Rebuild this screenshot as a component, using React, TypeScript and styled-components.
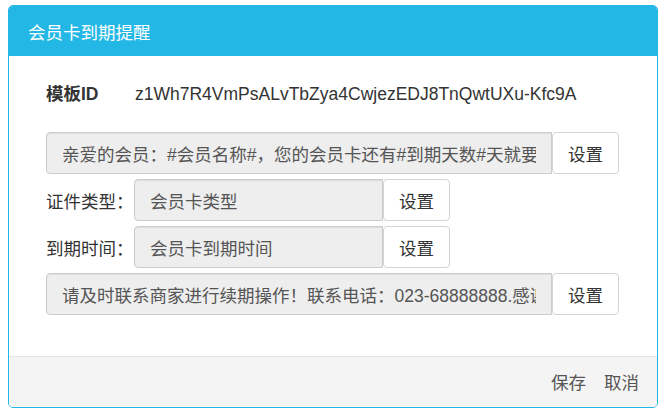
import React from "react";
import styled, { createGlobalStyle } from "styled-components";

const GlobalStyle = createGlobalStyle`
  html, body {
    margin: 0;
    padding: 0;
    background: #fff;
  }
  body {
    font-family: "Liberation Sans", "Noto Sans CJK SC", sans-serif;
    font-size: 17.5px;
    color: #333;
  }
  * {
    box-sizing: border-box;
  }
`;

type Field = {
  label?: string;
  value: string;
  wide?: boolean;
};

const fields: Field[] = [
  {
    value:
      "亲爱的会员：#会员名称#，您的会员卡还有#到期天数#天就要到期了，请及时续期。",
    wide: true,
  },
  { label: "证件类型：", value: "会员卡类型" },
  { label: "到期时间：", value: "会员卡到期时间" },
  {
    value: "请及时联系商家进行续期操作！联系电话：023-68888888.感谢您的支持！",
    wide: true,
  },
];

const App: React.FC = () => {
  return (
    <>
      <GlobalStyle />
      <Dialog>
        <Header>会员卡到期提醒</Header>
        <Body>
          <IdRow>
            <IdLabel>模板ID</IdLabel>
            <IdValue>z1Wh7R4VmPsALvTbZya4CwjezEDJ8TnQwtUXu-Kfc9A</IdValue>
          </IdRow>
          <Fields>
            {fields.map((f, i) => (
              <FieldRow key={i}>
                {f.label && <FieldLabel>{f.label}</FieldLabel>}
                <FieldInput readOnly value={f.value} $wide={f.wide} />
                <SetButton type="button">设置</SetButton>
              </FieldRow>
            ))}
          </Fields>
        </Body>
        <Footer>
          <FooterButton type="button">保存</FooterButton>
          <FooterButton type="button">取消</FooterButton>
        </Footer>
      </Dialog>
    </>
  );
};

export default App;

const Dialog = styled.div`
  display: flex;
  flex-direction: column;
  width: 650px;
  height: 403px;
  margin: 5px 0 0 8px;
  border: 1px solid #23b7e5;
  border-radius: 5px;
  overflow: hidden;
  background: #fff;
`;

const Header = styled.div`
  display: flex;
  align-items: center;
  height: 50px;
  padding: 0 19px;
  background: #23b7e5;
  color: #fff;
  font-size: 17.5px;
`;

const Body = styled.div`
  flex: 1;
  padding: 26px 37px 0;
`;

const IdRow = styled.div`
  display: flex;
  align-items: center;
  line-height: 25px;
  margin-bottom: 25px;
`;

const IdLabel = styled.span`
  flex-shrink: 0;
  width: 89px;
  font-weight: bold;
  color: #333;
`;

const IdValue = styled.span`
  color: #333;
  white-space: nowrap;
`;

const Fields = styled.div`
  display: flex;
  flex-direction: column;
  gap: 5px;
`;

const FieldRow = styled.div`
  display: flex;
  align-items: center;
  height: 42px;
`;

const FieldLabel = styled.span`
  flex-shrink: 0;
  width: 88px;
  white-space: nowrap;
  color: #333;
`;

const FieldInput = styled.input<{ $wide?: boolean }>`
  flex-shrink: 0;
  width: ${(p) => (p.$wide ? "506px" : "249px")};
  height: 42px;
  padding: 0 15px;
  border: 1px solid #ccc;
  border-radius: 4px 0 0 4px;
  background: #eee;
  box-shadow: inset 0 1px 1px rgba(0, 0, 0, 0.075);
  color: #555;
  font-family: inherit;
  font-size: 17.5px;
  outline: none;
`;

const SetButton = styled.button`
  flex-shrink: 0;
  width: 67px;
  height: 42px;
  border: 1px solid #d4d4d4;
  border-radius: 4px;
  background: #fff;
  color: #333;
  font-family: inherit;
  font-size: 17.5px;
  cursor: pointer;
`;

const Footer = styled.div`
  display: flex;
  align-items: center;
  justify-content: flex-end;
  gap: 18px;
  height: 51px;
  padding: 0 18px 2px;
  border-top: 1px solid #e5e5e5;
  background: #f4f4f4;
`;

const FooterButton = styled.button`
  padding: 0;
  border: none;
  background: transparent;
  color: #555;
  font-family: inherit;
  font-size: 17.5px;
  cursor: pointer;
`;
